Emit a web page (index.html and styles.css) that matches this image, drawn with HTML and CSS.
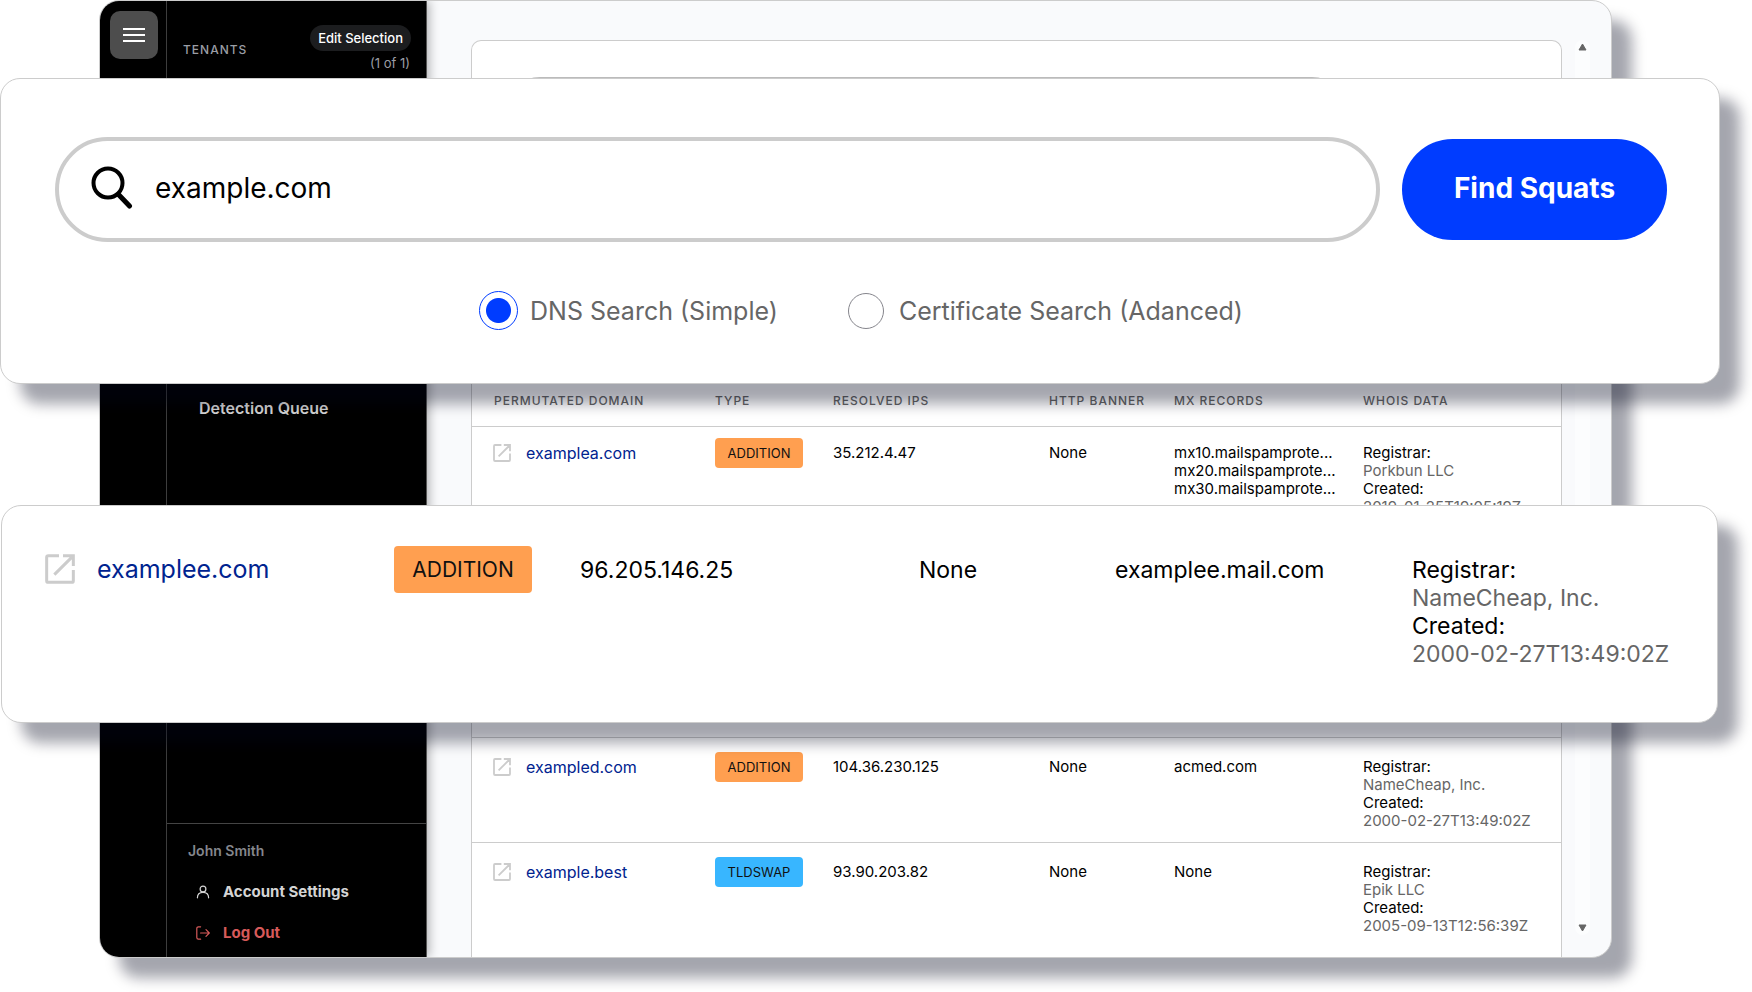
FILE: index.html
```html
<!DOCTYPE html>
<html lang="en">
<head>
<meta charset="utf-8">
<title>Domain Squats</title>
<link rel="stylesheet" href="styles.css">
</head>
<body>
<svg class="defs" aria-hidden="true">
  <symbol id="open" viewBox="0 0 18 18">
    <path d="M8.4 1H2a1 1 0 0 0-1 1v14a1 1 0 0 0 1 1h14a1 1 0 0 0 1-1V9.600M5.600 12.400L16 2M10.800 1H17v6.200" fill="none" stroke="currentColor" stroke-width="1.800"/>
  </symbol>
</svg>
<div class="stage">
  <div class="window">
    <div class="rail">
      <button class="burger" type="button" aria-label="Menu">
        <svg viewBox="0 0 22 14" width="22" height="14"><path d="M0 1h22M0 7h22M0 13h22" stroke="#fff" stroke-width="2"/></svg>
      </button>
    </div>
    <aside class="sidebar">
      <div class="tenants">
        <span class="tenants-title">TENANTS</span>
        <div class="tenants-side">
          <button class="pill" type="button">Edit Selection</button>
          <span class="tenants-count">(1 of 1)</span>
        </div>
      </div>
      <nav class="nav"><a href="#">Detection Queue</a></nav>
      <div class="account">
        <span class="account-name">John Smith</span>
        <a class="account-link" href="#">
          <svg viewBox="0 0 14 14" width="14" height="14" fill="none" stroke="currentColor" stroke-width="1.2" stroke-linecap="round"><circle cx="7" cy="4" r="2.9"/><path d="M1.4 12.8c0-3.4 2.3-5.4 5.6-5.4s5.6 2 5.6 5.4"/></svg>
          Account Settings</a>
        <a class="account-link account-link-out" href="#">
          <svg viewBox="0 0 14 14" width="14" height="14" fill="none" stroke="currentColor" stroke-width="1.2" stroke-linecap="round" stroke-linejoin="round"><path d="M4.6.8H2.4A1.6 1.6 0 0 0 .8 2.400v9.200a1.600 1.600 0 0 0 1.600 1.600h2.200M4.600 7h8.600M10 3.600L13.300 7 10 10.400"/></svg>
          Log Out</a>
      </div>
    </aside>
    <main class="main">
      <section class="panel">
        <div class="panel-search"><div class="panel-field"></div></div>
        <table class="domains">
          <colgroup><col class="c-domain"><col class="c-type"><col class="c-ips"><col class="c-banner"><col class="c-mx"><col class="c-whois"></colgroup>
          <thead>
            <tr><th>PERMUTATED DOMAIN</th><th>TYPE</th><th>RESOLVED IPS</th><th>HTTP BANNER</th><th>MX RECORDS</th><th>WHOIS DATA</th></tr>
          </thead>
          <tbody>
            <tr>
              <td><a class="domain" href="#"><svg class="open"><use href="#open"/></svg>examplea.com</a></td>
              <td class="type"><span class="badge">ADDITION</span></td>
              <td>35.212.4.47</td><td>None</td>
              <td>mx10.mailspamprote...<br>mx20.mailspamprote...<br>mx30.mailspamprote...</td>
              <td>Registrar:<br><span class="muted">Porkbun LLC</span><br>Created:<br><span class="muted">2019-01-25T19:05:19Z</span></td>
            </tr>
            <tr class="blank"><td colspan="6"></td></tr>
            <tr class="blank"><td colspan="6"></td></tr>
            <tr>
              <td><a class="domain" href="#"><svg class="open"><use href="#open"/></svg>exampled.com</a></td>
              <td class="type"><span class="badge">ADDITION</span></td>
              <td>104.36.230.125</td><td>None</td><td>acmed.com</td>
              <td>Registrar:<br><span class="muted">NameCheap, Inc.</span><br>Created:<br><span class="muted">2000-02-27T13:49:02Z</span></td>
            </tr>
            <tr>
              <td><a class="domain" href="#"><svg class="open"><use href="#open"/></svg>example.best</a></td>
              <td class="type"><span class="badge badge-tld">TLDSWAP</span></td>
              <td>93.90.203.82</td><td>None</td><td>None</td>
              <td>Registrar:<br><span class="muted">Epik LLC</span><br>Created:<br><span class="muted">2005-09-13T12:56:39Z</span></td>
            </tr>
          </tbody>
        </table>
      </section>
      <div class="scroller">
        <button type="button" aria-label="Scroll up"><svg viewBox="0 0 9 8" width="9" height="8"><path d="M4.500 1L8 7H1z" fill="#666" stroke="#666" stroke-linejoin="round"/></svg></button>
        <button type="button" aria-label="Scroll down"><svg viewBox="0 0 9 8" width="9" height="8"><path d="M4.500 7L8 1H1z" fill="#666" stroke="#666" stroke-linejoin="round"/></svg></button>
      </div>
    </main>
  </div>

  <form class="card search">
    <div class="search-row">
      <label class="field">
        <svg viewBox="0 0 42 44" width="42" height="44" fill="none" stroke="#000"><circle cx="17" cy="17" r="14.500" stroke-width="4"/><path d="M27.500 28.500L38.500 40" stroke-width="5" stroke-linecap="round"/></svg>
        <input type="text" value="example.com" aria-label="Domain">
      </label>
      <button class="find" type="button">Find Squats</button>
    </div>
    <div class="options">
      <label class="option"><input type="radio" name="mode" checked>DNS Search (Simple)</label>
      <label class="option option-idle"><input type="radio" name="mode">Certificate Search (Adanced)</label>
    </div>
  </form>

  <section class="card result">
    <table class="result-table">
      <colgroup><col class="r-domain"><col class="r-type"><col class="r-ips"><col class="r-banner"><col class="r-mx"><col class="r-whois"></colgroup>
      <tbody>
        <tr>
          <td><a class="domain" href="#"><svg class="open"><use href="#open"/></svg>examplee.com</a></td>
          <td class="type"><span class="badge">ADDITION</span></td>
          <td>96.205.146.25</td><td>None</td><td>examplee.mail.com</td>
          <td>Registrar:<br><span class="muted">NameCheap, Inc.</span><br>Created:<br><span class="muted">2000-02-27T13:49:02Z</span></td>
        </tr>
      </tbody>
    </table>
  </section>
</div>
</body>
</html>
```

FILE: styles.css
```css
* { box-sizing: border-box; }
body { margin: 0; background: #fff; color: #000; font-family: Inter, "Liberation Sans", sans-serif; overflow-x: hidden; }
button, input { font: inherit; margin: 0; }
button { border: 0; padding: 0; }
a { color: inherit; text-decoration: none; }
.defs { display: none; }

.stage { position: relative; padding: 0 140px 34px 99px; }
.window {
  display: flex;
  border: 1px solid #ccc;
  border-radius: 20px;
  overflow: hidden;
  background: #f9fafc;
  box-shadow: 20px 20px 14px rgba(0, 7, 28, .355);
}

.rail { flex: 0 0 67px; padding: 10px 8px 0 10px; background: #000; border-right: 1px solid #444; }
.burger { display: flex; align-items: center; justify-content: center; width: 48px; height: 48px; border-radius: 10px; background: #4d4d4d; }

.sidebar {
  flex: 0 0 260px;
  display: flex;
  flex-direction: column;
  background: #000;
  color: #d4d4d4;
  border-right: 1px solid #555;
  box-shadow: 2px 0 10px rgba(0, 0, 0, .3);
  font-size: 15px;
  line-height: 20px;
}
.tenants { display: flex; align-items: center; justify-content: space-between; padding: 24px 15px 0 16px; font-size: 13px; }
.tenants-title { font-size: 12px; font-weight: 500; letter-spacing: 1px; color: #9b9ea5; }
.tenants-side { display: flex; flex-direction: column; align-items: flex-end; }
.pill { height: 26px; padding: 0 8px; border-radius: 13px; background: #1c1d1f; color: #fff; font-size: 13px; font-weight: 500; }
.tenants-count { padding-right: 1px; line-height: 24px; color: #9b9ea5; }
.nav { padding: 323px 0 0 32px; font-size: 16px; font-weight: 600; }
.account { display: flex; flex-direction: column; gap: 21px; margin-top: auto; padding: 17px 0 14px 21px; border-top: 1px solid #444; font-weight: 700; }
.account-name { font-size: 14px; font-weight: 600; color: #85878d; }
.account-link { display: flex; align-items: center; gap: 13px; padding-left: 8px; }
.account-link-out { color: #d75a5a; }

.main { flex: 1; min-width: 0; display: flex; gap: 13px; padding: 39px 21px 0 44px; }
.panel { flex: 1; min-width: 0; background: #fff; border: 1px solid #ccc; border-bottom: 0; border-radius: 10px 10px 0 0; }
.panel-search { padding: 36px 217px 235px 36px; }
.panel-field { height: 64px; border: 2px solid #bbb; border-radius: 32px; }
.scroller { flex: 0 0 15px; display: flex; flex-direction: column; justify-content: space-between; align-items: center; margin-bottom: 22px; padding: 3px 0; border-radius: 8px; background: #fcfdfe; }
.scroller button { display: flex; background: none; }

table { width: 100%; table-layout: fixed; border-collapse: separate; border-spacing: 0; }
th, td { padding: 0; text-align: left; vertical-align: top; font-weight: 400; white-space: nowrap; }
.domains { font-size: 15px; line-height: 18px; }
.c-domain { width: 243px; }
.c-type { width: 118px; }
.c-ips { width: 216px; }
.c-banner { width: 125px; }
.c-mx { width: 189px; }
.c-whois { width: 198px; }
.domains th { padding: 16px 0; border-bottom: 1px solid #ccc; font-size: 12px; font-weight: 500; letter-spacing: 1px; color: #666; }
.domains td { padding: 20px 0 12px; border-bottom: 1px solid #ccc; }
.domains th:first-child { padding-left: 22px; }
.domains td:first-child { padding-left: 21px; }
.domains .type { padding-top: 14px; }
.domains tr:first-child td { padding-top: 17px; padding-bottom: 11px; }
.domains tr:first-child .type { padding-top: 11px; }
.domains tr:last-child td { padding-bottom: 22px; border-bottom: 0; }
.domains .blank td { height: 105px; }
.muted { color: #666; }
.domain { display: flex; align-items: center; gap: 15px; font-size: 16px; color: #00238f; }
.open { width: 18px; height: 18px; color: #ccc; }
.badge { display: flex; align-items: center; justify-content: center; width: 88px; height: 30px; border-radius: 4px; background: #ff9f50; color: #111; font-size: 13px; }
.badge-tld { background: #38b6ff; }

.card { position: absolute; background: #fff; border: 1px solid #ccc; border-radius: 20px; box-shadow: 20px 20px 14px rgba(0, 7, 28, .355); }
.search { top: 78px; left: 0; right: 32px; padding: 58px 52px 53px 54px; }
.search-row { display: flex; align-items: center; gap: 22px; }
.field { flex: 1; display: flex; align-items: center; gap: 22px; height: 105px; padding: 0 32px 4px; border: 4px solid #ccc; border-radius: 53px; }
.field input { flex: 1; min-width: 0; padding: 0; border: 0; outline: 0; background: none; color: #000; font-size: 28px; }
.find { width: 265px; height: 101px; padding-bottom: 3px; border-radius: 51px; background: #003cff; color: #fff; font-size: 28px; font-weight: 700; }
.options { display: flex; align-items: center; justify-content: center; gap: 70px; margin-top: 49px; }
.option { display: flex; align-items: center; gap: 12px; font-size: 25px; line-height: 32px; color: #666; }
.option input { appearance: none; width: 39px; height: 39px; border: 1px solid #003cff; border-radius: 50%; background: radial-gradient(circle, #003cff 12px, #fff 13px); }
.option-idle { gap: 15px; }
.option-idle input { width: 36px; height: 36px; border-color: #85858c; background: #fff; }

.result { top: 505px; left: 1px; right: 34px; font-size: 23px; line-height: 28px; }
.r-domain { width: 392px; }
.r-type { width: 186px; }
.r-ips { width: 339px; }
.r-banner { width: 196px; }
.r-mx { width: 297px; }
.r-whois { width: 305px; }
.result td { padding: 50px 0 54px; }
.result td:first-child { padding-top: 49px; padding-left: 43px; }
.result .type { padding-top: 40px; padding-bottom: 0; }
.result .domain { gap: 22px; height: 28px; font-size: 25px; }
.result .open { width: 30px; height: 30px; }
.result .badge { width: 138px; height: 47px; font-size: 21px; }
```
